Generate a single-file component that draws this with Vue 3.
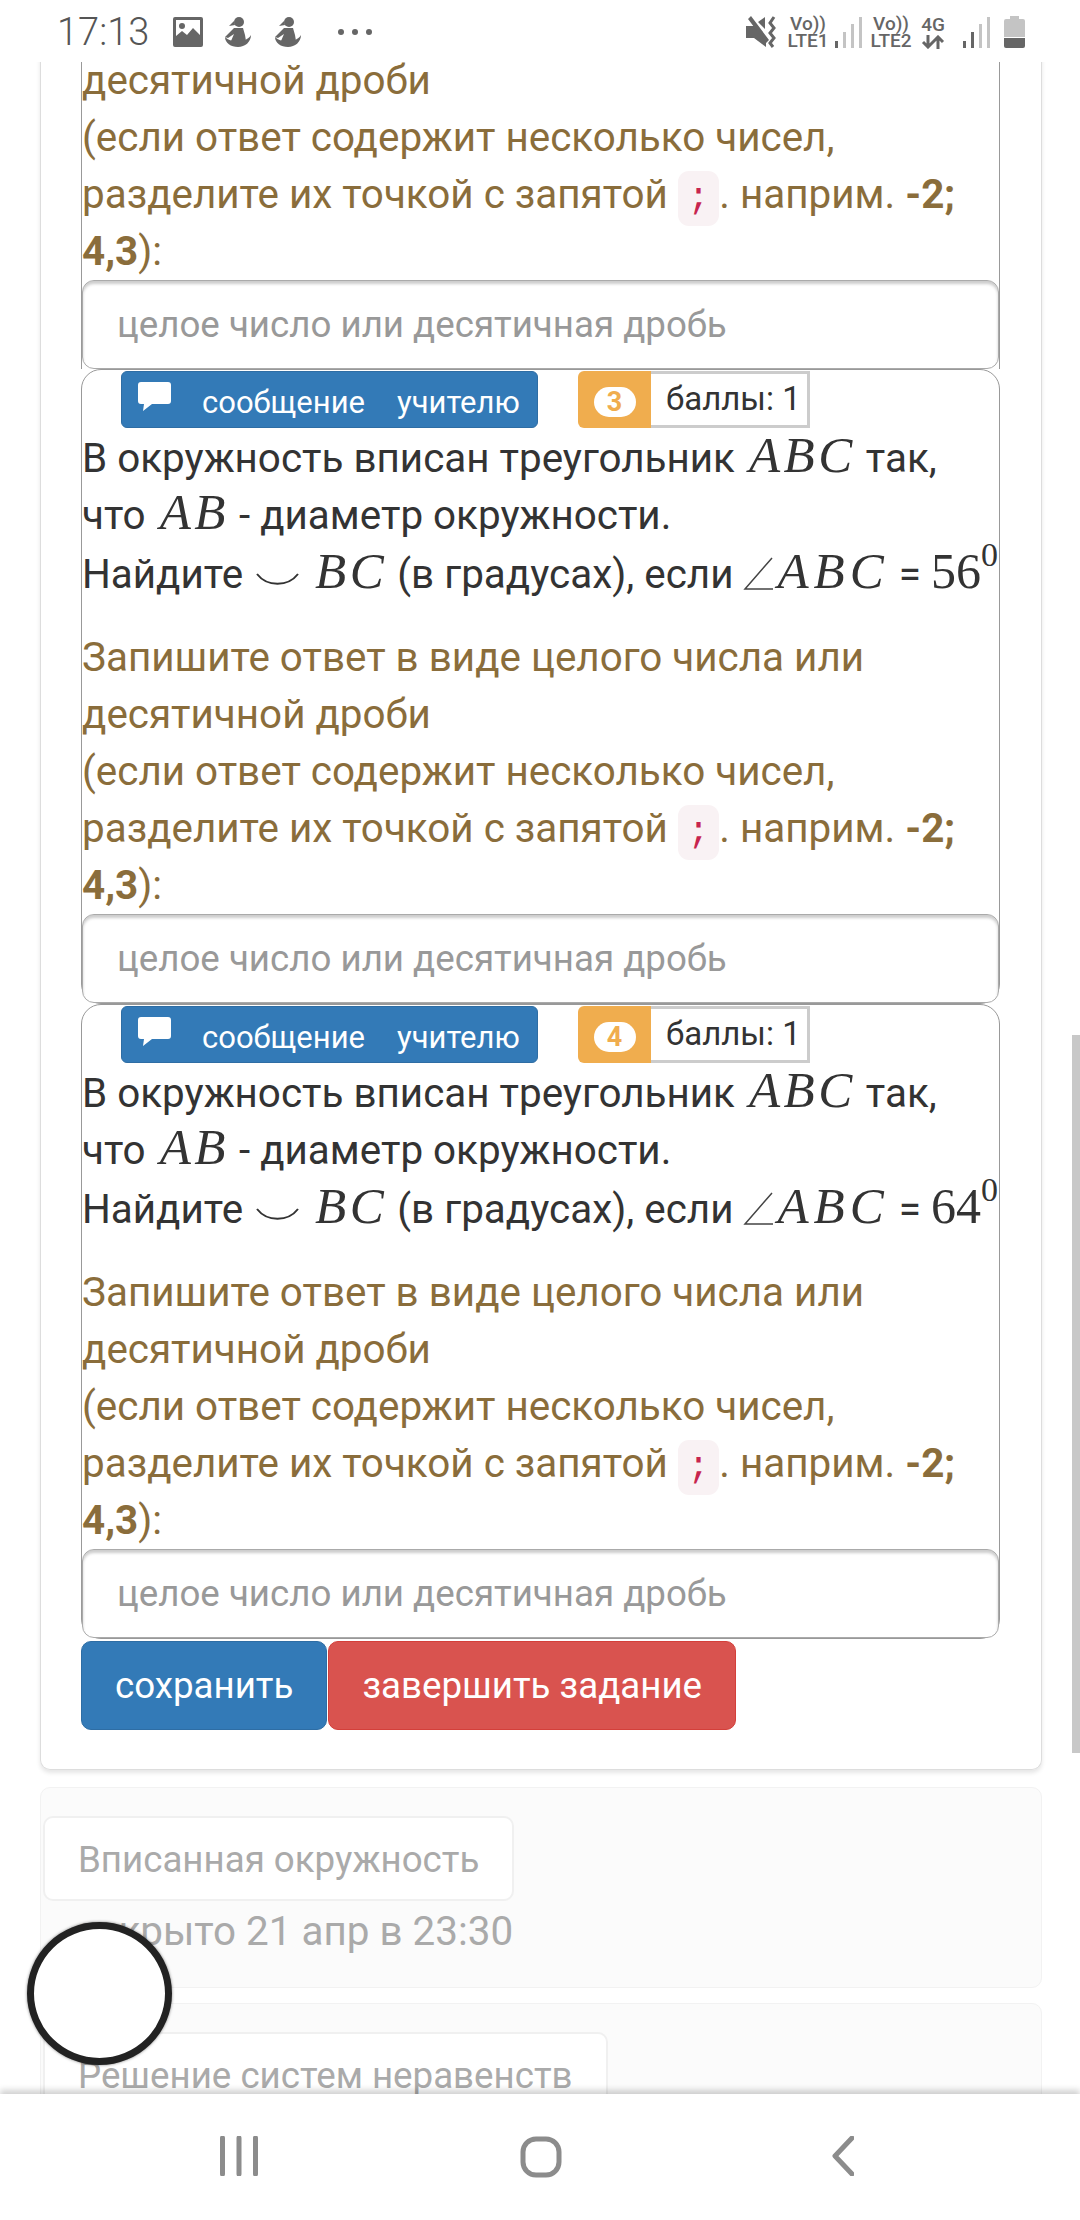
<script setup>
const hint = 'целое число или десятичная дробь'
const questions = [
  { num: 3, angle: 56 },
  { num: 4, angle: 64 }
]
const signal = [7, 16, 24, 31]
</script>

<template>
  <div class="screen">
    <header class="status">
      <div class="status-left">
        <span class="time">17:13</span>
        <svg class="ic-image" viewBox="0 0 30 30">
          <path fill-rule="evenodd" d="M2 0h26a2 2 0 0 1 2 2v26a2 2 0 0 1-2 2H2a2 2 0 0 1-2-2V2a2 2 0 0 1 2-2zM3 3v16l6-5 5 4 6-7 7 7V3z" />
          <circle cx="9" cy="9" r="3" />
        </svg>
        <svg v-for="n in 2" :key="n" class="ic-person" viewBox="0 0 26 30">
          <circle cx="14" cy="5" r="5" />
          <path d="M9 4 4 9l6-1z" />
          <path d="M9 11h9l2 7 1 6H6l3-7-6 4-3-1z" />
          <path d="M0 20c4 4 8 4 13 4s10-1 13-6c0 7-6 12-13 12S0 26 0 20z" />
        </svg>
        <span class="dots"><i></i><i></i><i></i></span>
      </div>
      <div class="status-right">
        <svg class="ic-mute" viewBox="0 0 32 32">
          <path d="M0 10h6l3 0 11 14v7L8 22H0z" />
          <path d="M2 3 5 0l18 24-3 3zM12 6l7-5v12z" />
          <path class="wave" d="M28 1l-4 6 4 5-4 5 4 5-4 5 3 4" />
        </svg>
        <div class="sim">
          <span>Vo))</span>
          <span>LTE1</span>
        </div>
        <svg class="ic-bars first" viewBox="0 0 27 32">
          <rect v-for="(h, i) in signal" :key="i" :x="i * 8" :y="32 - h" width="3" :height="h" :class="{ off: i > 0 }" />
        </svg>
        <div class="sim second">
          <span>Vo))</span>
          <span>LTE2</span>
        </div>
        <div class="sim narrow">
          <span>4G</span>
          <svg class="ic-arrows" viewBox="0 0 24 14">
            <path d="M7 0v12M2 7l5 5 5-5M17 14V2M12 7l5-5 5 5" />
          </svg>
        </div>
        <svg class="ic-bars second" viewBox="0 0 27 32">
          <rect v-for="(h, i) in signal" :key="i" :x="i * 8" :y="32 - h" width="3" :height="h" :class="{ off: i > 1 }" />
        </svg>
        <svg class="ic-battery" viewBox="0 0 21 32">
          <path class="off" d="M6 0h9v3h4a2 2 0 0 1 2 2v16H0V5a2 2 0 0 1 2-2h4z" />
          <path d="M0 22h21v8a2 2 0 0 1-2 2H2a2 2 0 0 1-2-2z" />
        </svg>
      </div>
    </header>

    <main class="page">
      <section class="card">
        <div class="question clipped">
          <p class="hint-text">
            десятичной дроби<br />
            (если ответ содержит несколько чисел,<br />
            разделите их точкой с запятой <code>;</code>. наприм. <b>-2;<br />4,3</b>):
          </p>
          <input class="answer" type="text" :placeholder="hint" />
        </div>

        <div v-for="q in questions" :key="q.num" class="question">
          <div class="q-head">
            <button class="btn-msg" type="button">
              <svg class="ic-comment" viewBox="0 0 33 29">
                <path d="M3 0h27a3 3 0 0 1 3 3v16a3 3 0 0 1-3 3H14l-9 7 1-7H3a3 3 0 0 1-3-3V3a3 3 0 0 1 3-3z" />
              </svg>
              <span>сообщение</span><span>учителю</span>
            </button>
            <div class="score">
              <span class="score-num"><em>{{ q.num }}</em></span>
              <span class="score-label">баллы: 1</span>
            </div>
          </div>
          <div class="q-text">
            <div>В окружность вписан треугольник <span class="math">ABC</span> так,</div>
            <div>что <span class="math">AB</span> - диаметр окружности.</div>
            <div class="line-math">
              Найдите
              <svg class="ic-arc" viewBox="0 0 43 13"><path d="M1 1c10 13 31 13 41 0" /></svg>
              <span class="math">BC</span> (в градусах), если
              <svg class="ic-angle" viewBox="0 0 30 33"><path d="M29 1 2 32h28" /></svg><span class="math wide">ABC</span> = <span class="num">{{ q.angle }}<sup>0</sup></span>
            </div>
          </div>
          <p class="hint-text">
            Запишите ответ в виде целого числа или<br />
            десятичной дроби<br />
            (если ответ содержит несколько чисел,<br />
            разделите их точкой с запятой <code>;</code>. наприм. <b>-2;<br />4,3</b>):
          </p>
          <input class="answer" type="text" :placeholder="hint" />
        </div>

        <div class="actions">
          <button class="btn-action blue" type="button">сохранить</button>
          <button class="btn-action red" type="button">завершить задание</button>
        </div>
      </section>

      <section class="card-muted">
        <div class="topic">Вписанная окружность</div>
        <div class="closed">закрыто 21 апр в 23:30</div>
      </section>

      <section class="card-muted">
        <div class="topic">Решение систем неравенств</div>
      </section>
    </main>

    <div class="scrollbar"></div>
    <div class="fab"></div>

    <nav class="navbar">
      <svg class="nav-recent" viewBox="0 0 38 40">
        <path d="M2.5 2v36M19 2v36M35.500 2v36" />
      </svg>
      <svg class="nav-home" viewBox="0 0 42 42">
        <rect x="3" y="3" width="36" height="36" rx="13" />
      </svg>
      <svg class="nav-back" viewBox="0 0 22 40">
        <path d="M20 2 3 20l17 18" />
      </svg>
    </nav>
  </div>
</template>

<style>
html, body { margin: 0; background: #fff; }
</style>

<style scoped>
.screen {
  position: relative;
  width: 1080px;
  height: 2220px;
  overflow: hidden;
  background: #fff;
  font-family: Roboto, "Liberation Sans", sans-serif;
  font-size: 40.4px;
  line-height: 57px;
  color: #333;
}

/* status bar lies over the scrolled page */
.status {
  position: absolute;
  top: 0; left: 0; right: 0;
  height: 62px;
  z-index: 5;
  background: #fff;
  display: flex;
  justify-content: space-between;
  align-items: flex-start;
  box-sizing: border-box;
  padding: 16px 55px 0 57px;
  color: #666;
}
.status svg { fill: #666; display: block; }
.status-left { display: flex; align-items: center; height: 32px; }
.time { font-size: 38px; font-weight: 300; line-height: 32px; width: 116px; color: #555; }
.ic-image { width: 30px; height: 30px; margin-right: 22px; }
.ic-person { width: 26px; height: 30px; margin-right: 24px; }
.dots { display: flex; gap: 8px; margin-left: 13px; }
.dots i { width: 6px; height: 6px; border-radius: 50%; background: #666; }
.status-right { display: flex; align-items: center; height: 32px; }
.ic-mute { width: 32px; height: 32px; margin-right: 10px; }
.ic-mute .wave { fill: none; stroke: #666; stroke-width: 3; }
.sim {
  display: flex;
  flex-direction: column;
  align-items: center;
  width: 40px;
  font-size: 19px;
  font-weight: 500;
  line-height: 17px;
}
.sim.second { margin-left: 9px; }
.sim.narrow { width: 24px; margin-left: 10px; }
.status .ic-arrows {
  width: 24px;
  height: 14px;
  margin-top: 2px;
  fill: none;
  stroke: #666;
  stroke-width: 3;
}
.ic-bars { width: 27px; height: 32px; }
.ic-bars.first { margin-left: 7px; }
.ic-bars.second { margin-left: 18px; }
.ic-bars .off, .ic-battery .off { fill: #c4c4c4; }
.ic-battery { width: 21px; height: 32px; margin-left: 14px; }

.page { padding-top: 52px; }

.card {
  width: 1002px;
  margin-left: 40px;
  box-sizing: border-box;
  border: 1px solid #ddd;
  border-top: 0;
  border-radius: 0 0 10px 10px;
  box-shadow: 0 3px 4px rgba(0, 0, 0, 0.1);
  padding: 0 41px 39px 40px;
}
.question {
  border: 1px solid #999;
  border-radius: 20px;
  padding-top: 1px;
}
.question.clipped {
  border-top: 0;
  border-bottom: 0;
  border-radius: 0;
  padding-top: 0;
}
.q-head {
  display: flex;
  align-items: stretch;
  height: 57px;
  margin-bottom: 2px;
  padding-left: 39px;
}
.btn-msg {
  width: 417px;
  margin: 0;
  padding: 0 0 0 16px;
  display: flex;
  align-items: center;
  border: 1px solid #2e6da4;
  border-radius: 6px;
  background: #337ab7;
  color: #fff;
  font: inherit;
  font-size: 31px;
}
.btn-msg span { padding-top: 5px; }
.btn-msg span:first-of-type { margin-left: 31px; margin-right: 32px; }
.ic-comment { width: 33px; height: 29px; fill: #fff; margin-top: -6px; flex: none; }
.score { display: flex; margin-left: 40px; }
.score-num {
  width: 73px;
  box-sizing: border-box;
  padding-top: 5px;
  display: flex;
  align-items: center;
  justify-content: center;
  background: #f0ad4e;
  border-radius: 6px 0 0 6px;
}
.score-num em {
  display: block;
  width: 42px;
  height: 30px;
  border-radius: 15px;
  background: #fff;
  color: #f0ad4e;
  font-style: normal;
  font-weight: 700;
  font-size: 27px;
  line-height: 30px;
  text-align: center;
}
.score-label {
  width: 159px;
  box-sizing: border-box;
  border: 3px solid #ccc;
  border-left: 0;
  padding-left: 15px;
  background: #fff;
  font-size: 33px;
  line-height: 50px;
  white-space: nowrap;
}

p { margin: 0; }
.q-text { margin-bottom: 26px; white-space: nowrap; }
.line-math { margin-top: 2px; }
.math {
  font-family: "Liberation Serif", serif;
  font-style: italic;
  font-size: 51px;
  letter-spacing: 3.5px;
  line-height: 1px;
  margin-left: 4px;
  color: #333;
}
.math.wide { letter-spacing: 5px; }
.num {
  font-family: "Liberation Serif", serif;
  font-size: 50px;
  line-height: 1px;
}
.num sup { font-size: 34px; line-height: 1px; vertical-align: 22px; }
.ic-arc {
  width: 43px;
  height: 13px;
  margin: 0 12px 0 3px;
  vertical-align: 2px;
  fill: none;
  stroke: #333;
  stroke-width: 2;
}
.ic-angle {
  width: 30px;
  height: 33px;
  vertical-align: -2px;
  fill: none;
  stroke: #444;
  stroke-width: 1.5;
}
.hint-text { color: #8a6d3b; white-space: nowrap; }
code {
  font-family: "Liberation Mono", monospace;
  font-size: 36px;
  line-height: 1px;
  color: #c7254e;
  background: #f9f2f4;
  border-radius: 11px;
  padding: 7px 10px;
}
.answer {
  display: block;
  width: 100%;
  height: 89px;
  box-sizing: border-box;
  margin: 0;
  padding: 0 34px;
  border: 1px solid #aaa;
  border-radius: 12px;
  box-shadow: inset 0 3px 3px rgba(0, 0, 0, 0.2);
  background: #fff;
  font: inherit;
  font-size: 36.7px;
  outline: none;
}
.answer::placeholder { color: #999; opacity: 1; }

.actions { display: flex; margin-top: 2px; }
.btn-action {
  height: 89px;
  margin: 0 1px 0 0;
  padding: 0 33px;
  border-radius: 10px;
  color: #fff;
  font: inherit;
  font-size: 36.7px;
}
.blue { background: #337ab7; border: 1px solid #2e6da4; }
.red { background: #d9534f; border: 1px solid #d43f3a; }

.card-muted {
  width: 1002px;
  margin: 17px 0 0 40px;
  box-sizing: border-box;
  height: 201px;
  padding: 28px 0 0 2px;
  background: #fbfbfb;
  border: 1px solid #f2f2f2;
  border-radius: 10px;
  color: #aaa;
}
.card-muted + .card-muted { margin-top: 15px; }
.topic {
  display: inline-block;
  height: 85px;
  box-sizing: border-box;
  padding: 0 33px;
  font-size: 36.7px;
  line-height: 83px;
  background: #fff;
  border: 2px solid #f0f0f0;
  border-radius: 10px;
  vertical-align: top;
}
.closed { margin-top: 2px; padding-left: 33px; }

.scrollbar {
  position: absolute;
  top: 1035px;
  right: 0;
  width: 8px;
  height: 718px;
  background: #c8c8c8;
}
.fab {
  position: absolute;
  left: 27px;
  top: 1922px;
  width: 145px;
  height: 143px;
  box-sizing: border-box;
  border: 7px solid #222;
  border-radius: 50%;
  background: #fff;
  box-shadow: 0 0 3px rgba(0, 0, 0, 0.5);
  z-index: 3;
}

.navbar {
  position: absolute;
  left: 0; right: 0; bottom: 0;
  height: 126px;
  z-index: 4;
  background: #fff;
  box-shadow: 0 -4px 6px rgba(0, 0, 0, 0.18);
}
.navbar svg {
  position: absolute;
  top: 42px;
  fill: none;
  stroke: #8c8c8c;
  stroke-width: 5;
  stroke-linecap: round;
  stroke-linejoin: round;
}
.nav-recent { left: 220px; width: 38px; height: 40px; }
.nav-home { left: 520px; width: 42px; height: 42px; }
.nav-back { left: 832px; width: 22px; height: 40px; }
</style>
